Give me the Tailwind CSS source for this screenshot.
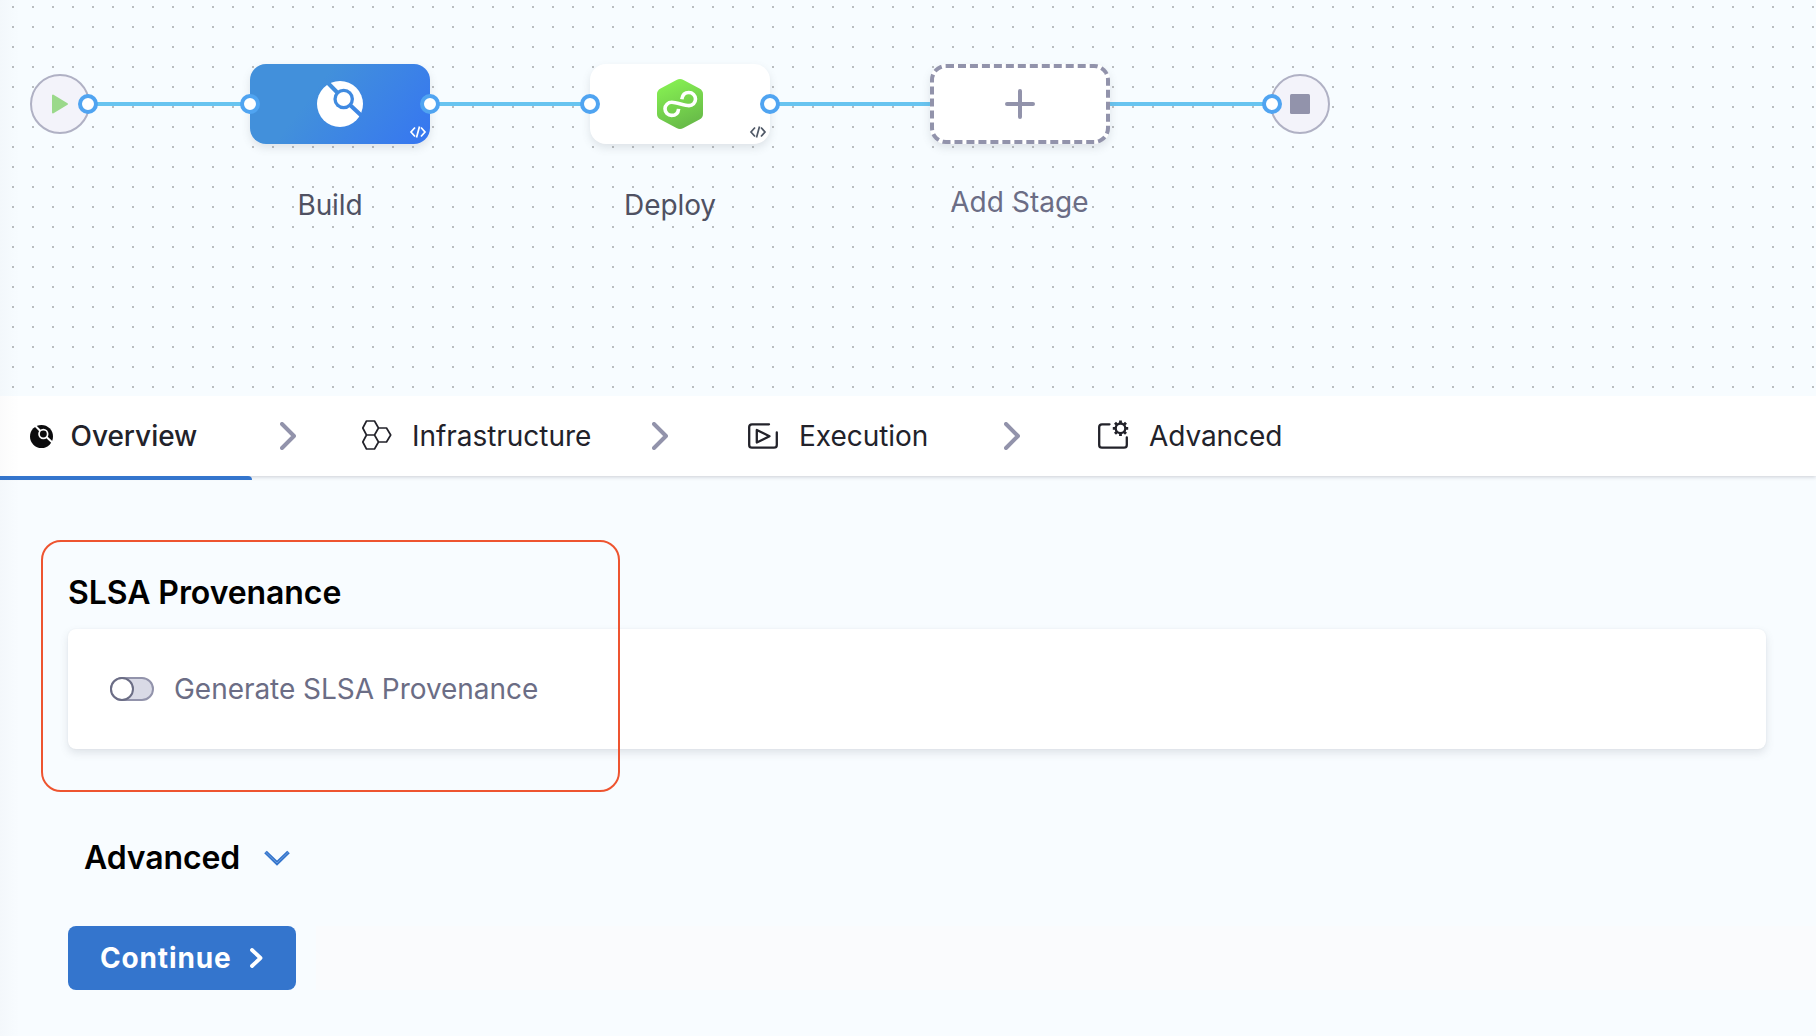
<!DOCTYPE html>
<html lang="en">
<head>
<meta charset="utf-8">
<title>Pipeline Studio</title>
<script src="https://cdn.jsdelivr.net/npm/@tailwindcss/browser@4"></script>
</head>
<body class="relative w-[1816px] h-[1036px] overflow-hidden bg-[#f8fcff] font-[Inter,sans-serif] text-[28px] leading-[34px] tracking-[-0.04px] text-[#22222a]">

<!-- Pipeline canvas -->
<section class="relative z-10 h-[396px] bg-[#f7fcff]">
  <svg class="absolute inset-0" width="1816" height="396" fill="none">
    <defs>
      <pattern id="dots" width="20" height="20" patternUnits="userSpaceOnUse"><rect x="12" y="6" width="2" height="2" fill="#b9bdc0"/></pattern>
      <linearGradient id="leaf" x1="670" y1="80" x2="690" y2="128" gradientUnits="userSpaceOnUse"><stop stop-color="#86f052"/><stop offset="1" stop-color="#66b848"/></linearGradient>
    </defs>
    <rect width="1816" height="396" fill="url(#dots)"/>
    <path d="M88 104H1272" stroke="#68c4f0" stroke-width="4"/>
    <circle cx="60" cy="104" r="29" fill="#f3f3fa" stroke="#b0b1c4" stroke-width="2"/>
    <path d="M53 95.500V112.500L67 104Z" fill="#9bd98b" stroke="#9bd98b" stroke-width="2" stroke-linejoin="round"/>
    <circle cx="1300" cy="104" r="29" fill="#f3f3fa" stroke="#b0b1c4" stroke-width="2"/>
    <rect x="1290" y="94" width="20" height="20" rx="1.500" fill="#9293ab"/>
  </svg>

  <div class="absolute left-[250px] top-16 w-[180px] h-20 rounded-2xl bg-linear-[127deg,#4290db_0%,#4290db_35%,#3676f1_100%] shadow-[0_4px_8px_rgba(96,97,112,0.16)]"></div>
  <div class="absolute left-[590px] top-16 w-[180px] h-20 rounded-2xl bg-white shadow-[0_4px_8px_rgba(96,97,112,0.16)]"></div>
  <div class="absolute left-[930px] top-16 w-[180px] h-20 rounded-2xl bg-white border-4 border-dashed border-[#9293ab] shadow-[0_4px_8px_rgba(96,97,112,0.16)]"></div>

  <svg class="absolute inset-0" width="1816" height="396" fill="none">
    <defs>
      <mask id="ci" maskUnits="userSpaceOnUse" x="310" y="70" width="60" height="60"><rect x="310" y="70" width="60" height="60" fill="#fff"/><path d="M325 80L343.700 99L365 119" stroke="#000" stroke-width="4"/><circle cx="343.700" cy="99" r="10.300" fill="#000"/></mask>
    </defs>
    <circle cx="340" cy="104" r="23" fill="#fff" mask="url(#ci)"/>
    <circle cx="343.700" cy="99" r="7" fill="#fff"/>
    <path d="M676.500 80Q680 78 683.500 80L699.500 88.500Q703 90.500 703 94V114Q703 117.500 699.500 119.500L683.500 128Q680 130 676.500 128L660.500 119.500Q657 117.500 657 114V94Q657 90.500 660.500 88.500Z" fill="url(#leaf)"/>
    <path d="M681.800 99.200C682.500 94.500 685.500 92.500 688.800 92.500C692.600 92.500 695.500 95.500 695.500 99C695.500 102.600 692.600 105.600 689 105.600C684.500 105.600 676.500 102.300 671.800 102.300C668 102.300 665 105.200 665 108.800C665 112.500 668 115.400 671.500 115.400C675 115.400 678.200 113.500 678.600 108.800" stroke="#fff" stroke-width="3.600"/>
    <path d="M415 127.500L411 132L415 136.500M421 127.500L425 132L421 136.500M419.500 126.500L416.500 137.500" stroke="#fff" stroke-width="1.700"/>
    <path d="M755 127.500L751 132L755 136.500M761 127.500L765 132L761 136.500M759.500 126.500L756.500 137.500" stroke="#4f5866" stroke-width="1.700"/>
    <path d="M1007 104H1033M1020 91V117" stroke="#9293ab" stroke-width="4" stroke-linecap="round"/>
    <g fill="#fff" stroke="#50a4f1" stroke-width="4">
      <circle cx="88" cy="104" r="8"/><circle cx="250" cy="104" r="8"/><circle cx="430" cy="104" r="8"/>
      <circle cx="590" cy="104" r="8"/><circle cx="770" cy="104" r="8"/><circle cx="1272" cy="104" r="8"/>
    </g>
  </svg>

  <div class="absolute left-[230px] top-[188px] w-[200px] text-center tracking-[-0.08px] text-[#4f5162]">Build</div>
  <div class="absolute left-[570px] top-[188px] w-[200px] text-center tracking-[-0.08px] text-[#4f5162]">Deploy</div>
  <div class="absolute left-[919px] top-[185px] w-[201px] text-center tracking-[0.06px] text-[#6b6d85]">Add Stage</div>
</section>

<!-- Stage tabs -->
<nav class="relative flex h-20 bg-white shadow-[0_1px_4px_rgba(40,41,61,0.22)]">
  <div class="flex w-[280px] items-center pl-[29.500px] font-medium">
    <svg class="w-[23px] h-[23px] mr-[18px]" viewBox="317 81 46 46"><circle cx="340" cy="104" r="23" fill="#0b0b0d" mask="url(#ci)"/><circle cx="343.700" cy="99" r="6.900" fill="#0b0b0d"/></svg>
    <span>Overview</span>
  </div>
  <svg class="w-4 my-auto h-7 shrink-0" viewBox="0 0 16 28" fill="none" stroke="#9293ab" stroke-width="4" stroke-linecap="round" stroke-linejoin="round"><path d="M2 2L14 14L2 26"/></svg>
  <div class="flex w-[356px] items-center pl-[66px]">
    <svg class="w-[30px] h-[30px] mr-[20px] -mt-[2px]" viewBox="0 0 30 30" fill="none" stroke="#22222a" stroke-width="1.700" stroke-linejoin="round"><path d="M4.500 1H12.500L16.500 8L12.500 15H4.500L.8 8ZM4.500 15H12.500L16.500 22L12.500 29H4.500L.8 22ZM16.500 8H24.500L28.700 15L24.500 22H16.500"/></svg>
    <span>Infrastructure</span>
  </div>
  <svg class="w-4 my-auto h-7 shrink-0" viewBox="0 0 16 28" fill="none" stroke="#9293ab" stroke-width="4" stroke-linecap="round" stroke-linejoin="round"><path d="M2 2L14 14L2 26"/></svg>
  <div class="flex w-[336px] items-center pl-20">
    <svg class="w-[30px] h-[26px] mr-[21px]" viewBox="0 0 30 26" fill="none" stroke="#22222a" stroke-width="2.300" stroke-linecap="round" stroke-linejoin="round"><path d="M21 1.300H4Q1.200 1.300 1.200 4V22Q1.200 24.700 4 24.700H26Q28.800 24.700 28.800 22V9.500M8.800 7V19.500L21.500 13.200Z"/></svg>
    <span>Execution</span>
  </div>
  <svg class="w-4 my-auto h-7 shrink-0" viewBox="0 0 16 28" fill="none" stroke="#9293ab" stroke-width="4" stroke-linecap="round" stroke-linejoin="round"><path d="M2 2L14 14L2 26"/></svg>
  <div class="flex items-center pl-[78px]">
    <svg class="w-[31px] h-[30px] mr-[20px] -mt-[4px]" viewBox="0 0 31 30" fill="none" stroke="#22222a" stroke-width="2.300" stroke-linecap="round"><path d="M11.500 5.300H4Q1.200 5.300 1.200 8V26Q1.200 28.700 4 28.700H26Q28.800 28.700 28.800 26V18.500"/><circle cx="22.500" cy="9.300" r="4.800"/><path stroke-width="2.800" stroke-linecap="butt" d="M22.500 4V1.500M22.500 14.500V17M17.200 9.300H14.800M27.800 9.300H30.200M18.800 5.600L17 3.800M26.200 5.600L28 3.800M18.800 13L17 14.800M26.200 13L28 14.800"/></svg>
    <span class="tracking-[-0.08px]">Advanced</span>
  </div>
  <div class="absolute left-0 top-20 w-[252px] h-1 rounded-tr bg-[#3475cd]"></div>
</nav>

<!-- Stage overview -->
<main class="flex flex-col pl-[68px] pr-[50px]">
  <h2 class="mt-[97px] h-[39px] text-[32px] leading-[39px] font-semibold tracking-[-0.08px] text-black">SLSA Provenance</h2>
  <div class="mt-[17px] flex h-[120px] items-center rounded-lg bg-white pl-[42px] shadow-[0_4px_8px_rgba(96,97,112,0.16),0_0_2px_rgba(40,41,61,0.06)]">
    <span class="relative h-6 w-11 rounded-full border-2 border-[#9293ab] bg-[#d9dae6]"><span class="absolute -left-[2px] -top-[2px] size-6 rounded-full border-2 border-[#6b6d85] bg-white"></span></span>
    <span class="ml-[20px] text-[#6b6d85]">Generate SLSA Provenance</span>
  </div>
  <div class="mt-[89px] ml-[16px] flex h-[39px] items-center gap-[24px] text-[32px] leading-[39px] font-semibold tracking-[-0.1px] text-black">
    <span>Advanced</span>
    <svg width="26" height="16" viewBox="0 0 26 16" fill="none"><path d="M1.500 2L13 13L24.500 2" stroke="#3475cd" stroke-width="3.800"/><path d="M1.500 2L13 13L24.500 2" stroke="#8fb4e6" stroke-width=".6"/></svg>
  </div>
  <div class="-mr-[50px] mt-[49px] flex h-16">
    <button class="flex w-[228px] shrink-0 items-center rounded-lg bg-[#3475cd] pl-8 font-bold tracking-[0.85px] text-white">
      <span class="w-[150px] text-left">Continue</span>
      <svg width="13" height="20" viewBox="0 0 13 20" fill="none" stroke="#fff" stroke-width="3.800" stroke-linecap="round" stroke-linejoin="round"><path d="M2 2L10.500 10L2 18"/></svg>
    </button>
    <div class="ml-5 grow bg-[#fafbfd]"></div>
  </div>
</main>

<div class="absolute z-10 left-[41px] top-[540px] w-[579px] h-[252px] rounded-[20px] border-2 border-[#ee5430]"></div>
<div class="absolute z-20 left-0 top-0 h-full w-5 bg-linear-to-r from-[#28293d]/2 to-transparent"></div>
</body>
</html>
